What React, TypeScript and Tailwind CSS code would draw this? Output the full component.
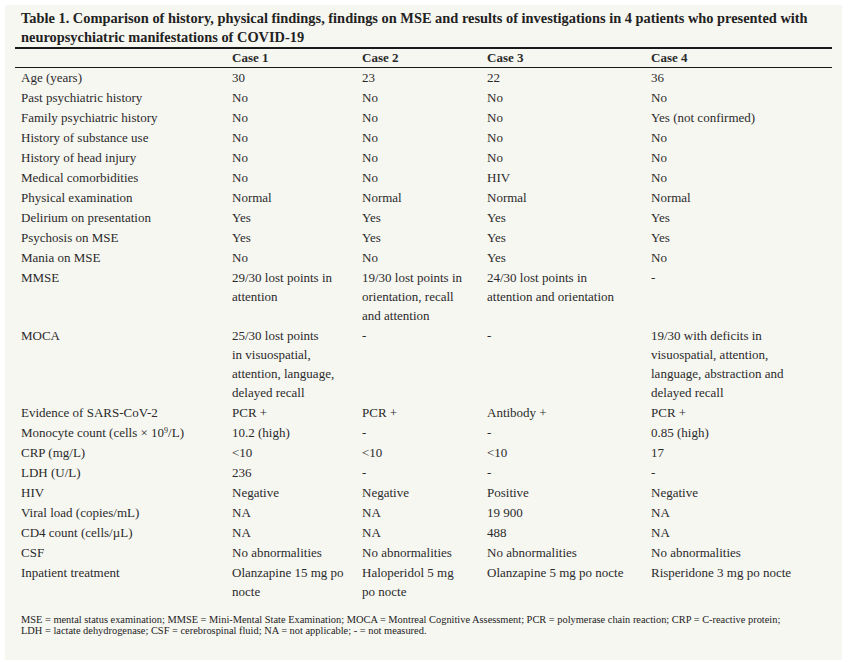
import React from 'react';

type Row = { label: React.ReactNode; cells: React.ReactNode[] };

const rows: Row[] = [
  { label: 'Age (years)', cells: ['30', '23', '22', '36'] },
  { label: 'Past psychiatric history', cells: ['No', 'No', 'No', 'No'] },
  { label: 'Family psychiatric history', cells: ['No', 'No', 'No', 'Yes (not confirmed)'] },
  { label: 'History of substance use', cells: ['No', 'No', 'No', 'No'] },
  { label: 'History of head injury', cells: ['No', 'No', 'No', 'No'] },
  { label: 'Medical comorbidities', cells: ['No', 'No', 'HIV', 'No'] },
  { label: 'Physical examination', cells: ['Normal', 'Normal', 'Normal', 'Normal'] },
  { label: 'Delirium on presentation', cells: ['Yes', 'Yes', 'Yes', 'Yes'] },
  { label: 'Psychosis on MSE', cells: ['Yes', 'Yes', 'Yes', 'Yes'] },
  { label: 'Mania on MSE', cells: ['No', 'No', 'Yes', 'No'] },
  {
    label: 'MMSE',
    cells: [
      <>29/30 lost points in<br />attention</>,
      <>19/30 lost points in<br />orientation, recall<br />and attention</>,
      <>24/30 lost points in<br />attention and orientation</>,
      '-',
    ],
  },
  {
    label: 'MOCA',
    cells: [
      <>25/30 lost points<br />in visuospatial,<br />attention, language,<br />delayed recall</>,
      '-',
      '-',
      <>19/30 with deficits in<br />visuospatial, attention,<br />language, abstraction and<br />delayed recall</>,
    ],
  },
  { label: 'Evidence of SARS-CoV-2', cells: ['PCR +', 'PCR +', 'Antibody +', 'PCR +'] },
  {
    label: <>Monocyte count (cells × 10<sup className="text-[8px]">9</sup>/L)</>,
    cells: ['10.2 (high)', '-', '-', '0.85 (high)'],
  },
  { label: 'CRP (mg/L)', cells: ['<10', '<10', '<10', '17'] },
  { label: 'LDH (U/L)', cells: ['236', '-', '-', '-'] },
  { label: 'HIV', cells: ['Negative', 'Negative', 'Positive', 'Negative'] },
  { label: 'Viral load (copies/mL)', cells: ['NA', 'NA', '19 900', 'NA'] },
  { label: 'CD4 count (cells/µL)', cells: ['NA', 'NA', '488', 'NA'] },
  { label: 'CSF', cells: ['No abnormalities', 'No abnormalities', 'No abnormalities', 'No abnormalities'] },
  {
    label: 'Inpatient treatment',
    cells: [
      <>Olanzapine 15 mg po<br />nocte</>,
      <>Haloperidol 5 mg<br />po nocte</>,
      'Olanzapine 5 mg po nocte',
      'Risperidone 3 mg po nocte',
    ],
  },
];

export default function App() {
  return (
    <div className="w-[848px] h-[662px] bg-white p-[5px] font-['Liberation_Serif',serif] text-[#2a2a2a]">
      <div className="w-[837px] h-[655px] bg-[#f7f7f2] pl-[10px] pt-[4px]">
        {/* Title */}
        <h1 className="pl-[6px] text-[14.4px] font-bold leading-[19px] text-[#222]">
          Table 1. Comparison of history, physical findings, findings on MSE and results of investigations in 4 patients who presented with
          <br />
          neuropsychiatric manifestations of COVID-19
        </h1>

        {/* Table */}
        <table className="w-[817px] border-collapse text-[13px] leading-[19px]">
          <colgroup>
            <col className="w-[211px]" />
            <col className="w-[130px]" />
            <col className="w-[125px]" />
            <col className="w-[164px]" />
            <col className="w-[187px]" />
          </colgroup>
          <thead>
            <tr className="border-t-2 border-b border-[#1a1a1a]">
              <th className="pl-[6px]" />
              {['Case 1', 'Case 2', 'Case 3', 'Case 4'].map((c) => (
                <th key={c} className="pl-[6px] text-left font-bold leading-[18px]">
                  {c}
                </th>
              ))}
            </tr>
          </thead>
          <tbody>
            {rows.map((r, i) => (
              <tr key={i} className="align-top">
                <td className="pl-[6px] pb-[1px]">{r.label}</td>
                {r.cells.map((c, j) => (
                  <td key={j} className="pl-[6px] pb-[1px] whitespace-nowrap">
                    {c}
                  </td>
                ))}
              </tr>
            ))}
          </tbody>
        </table>

        {/* Footnote */}
        <p className="mt-[12px] pl-[6px] text-[10.4px] leading-[11px] text-[#222]">
          MSE = mental status examination; MMSE = Mini-Mental State Examination; MOCA = Montreal Cognitive Assessment; PCR = polymerase chain reaction; CRP = C-reactive protein;
          <br />
          LDH = lactate dehydrogenase; CSF = cerebrospinal fluid; NA = not applicable; - = not measured.
        </p>
      </div>
    </div>
  );
}
